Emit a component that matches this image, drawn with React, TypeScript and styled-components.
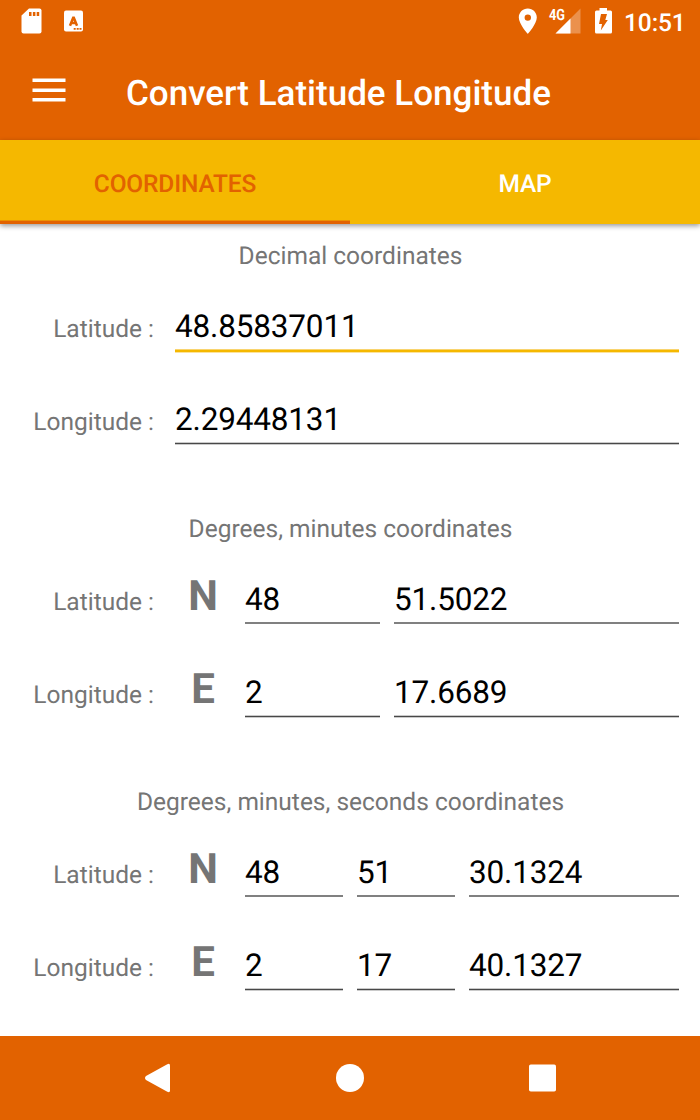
import React from 'react';
import styled, { createGlobalStyle } from 'styled-components';

const orange = '#e26200';
const amber = '#f5b800';

const GlobalStyle = createGlobalStyle`
  * { box-sizing: border-box; }
  body {
    margin: 0;
    background: #fff;
    font-family: Roboto, "Liberation Sans", sans-serif;
    text-rendering: geometricPrecision;
  }
`;

const Screen = styled.div`
  width: 700px;
  height: 1120px;
  display: flex;
  flex-direction: column;
  background: #fff;
  overflow: hidden;
`;

const StatusBar = styled.div`
  height: 42px;
  flex: none;
  display: flex;
  justify-content: space-between;
  background: ${orange};
  color: #fff;
`;

const StatusIcons = styled.svg`
  display: block;
  height: 42px;
`;

const StatusRight = styled.div`
  display: flex;
`;

const Clock = styled.span`
  width: 76px;
  line-height: 45px;
  font-size: 24.5px;
  font-weight: 500;
  letter-spacing: -0.1px;
`;

const AppBar = styled.header`
  height: 98px;
  flex: none;
  display: flex;
  align-items: center;
  padding: 0 0 0 32px;
  background: ${orange};
  color: #fff;
`;

const MenuButton = styled.button`
  width: 94px;
  height: 60px;
  padding: 0;
  border: 0;
  background: none;
`;

const MenuIcon = styled.svg`
  display: block;
`;

const Title = styled.h1`
  margin: 0;
  padding-top: 6px;
  font-size: 35px;
  line-height: 42px;
  font-weight: 500;
`;

const Tabs = styled.nav`
  height: 84px;
  flex: none;
  display: flex;
  background: ${amber};
  box-shadow: 0 2px 5px rgba(0, 0, 0, 0.4);
`;

const Tab = styled.div<{ $active?: boolean }>`
  flex: 1;
  text-align: center;
  line-height: 87px;
  height: 84px;
  font-size: 24.5px;
  font-weight: 500;
  letter-spacing: -0.15px;
  color: ${(p) => (p.$active ? orange : '#fff')};
  border-bottom: ${(p) => (p.$active ? `3px solid ${orange}` : '0')};
  box-shadow: ${(p) => (p.$active ? 'inset 0 -1px 0 rgba(226, 98, 0, 0.45)' : 'none')};
`;

const Content = styled.main`
  flex: 1;
  min-height: 0;
`;

const Section = styled.section`
  height: 273px;
  padding-right: 21px;
`;

const Heading = styled.h2`
  margin: 0;
  padding: 17px 0 0 22px;
  height: 73px;
  font-size: 24.5px;
  line-height: 30px;
  font-weight: 400;
  text-align: center;
  color: #757575;
`;

const Row = styled.div`
  height: 93px;
  display: flex;
  align-items: baseline;
`;

const Label = styled.label`
  width: 154px;
  flex: none;
  text-align: right;
  font-size: 24.5px;
  line-height: 30px;
  color: #757575;
`;

const Hemisphere = styled.span`
  text-align: center;
  font-size: 42px;
  line-height: 37px;
  font-weight: 700;
  color: #757575;
`;

const Fields = styled.div<{ $columns: string }>`
  flex: 1;
  margin-left: 21px;
  display: grid;
  align-items: baseline;
  grid-template-columns: ${(p) => p.$columns};
  column-gap: 14px;
`;

type Line = 'focused' | 'even' | 'fine';

const underlines: Record<Line, string> = {
  focused: `transparent 52px, #f9d46e 52px 53px, ${amber} 53px 55px, #fce39c 55px 56px`,
  even: 'transparent 52px, #808080 52px 54px, transparent 54px',
  fine: 'transparent 52px, #cacaca 52px 53px, #484848 53px 54px, #cacaca 54px 55px, transparent 55px',
};

const Field = styled.span<{ $line: Line }>`
  height: 56px;
  padding-top: 11px;
  font-size: 31.5px;
  line-height: 37px;
  letter-spacing: -0.17px;
  color: #000;
  background: linear-gradient(to bottom, ${(p) => underlines[p.$line]});
`;

const NavBar = styled.footer`
  height: 84px;
  flex: none;
  background: ${orange};
`;

interface CoordinateRowProps {
  label: string;
  hemisphere?: string;
  columns: string;
  values: string[];
  line: Line;
}

function CoordinateRow({ label, hemisphere, columns, values, line }: CoordinateRowProps) {
  return (
    <Row>
      <Label>{label}</Label>
      <Fields $columns={hemisphere ? `56px ${columns}` : columns}>
        {hemisphere && <Hemisphere>{hemisphere}</Hemisphere>}
        {values.map((value) => (
          <Field key={value} $line={line}>{value}</Field>
        ))}
      </Fields>
    </Row>
  );
}

export default function App() {
  return (
    <>
      <GlobalStyle />
      <Screen>
        <StatusBar>
          <StatusIcons width="120" height="42" viewBox="0 0 120 42">
            <path d="M29 8.500h10.500q2 0 2 2v21q0 2-2 2h-16q-2 0-2-2v-16z" fill="#fff" />
            <path d="M29 12h2.500v4H29zM32.900 12h2.500v4h-2.500zM36.700 12h2.500v4h-2.500z" fill={orange} />
            <rect x="64" y="10.500" width="19" height="21" rx="2" fill="#fff" />
            <path d="M70 25.800L73.500 17L77 25.800M71.300 23h4.500" fill="none" stroke={orange} strokeWidth="2.500" strokeLinejoin="bevel" />
            <path d="M73.700 28h2v1.800h-2zM76.700 28h2v1.800h-2zM79.500 28h2v1.800h-2z" fill={orange} />
          </StatusIcons>
          <StatusRight>
            <StatusIcons width="124" height="42" viewBox="500 0 124 42">
              <path d="M527.800 8.500c-5 0-9 4-9 8.900 0 6.700 9 16.300 9 16.300s9-9.600 9-16.300c0-4.900-4-8.900-9-8.900zm0 12.300a3.200 3.200 0 1 1 0-6.400 3.200 3.200 0 0 1 0 6.400z" fill="#fff" />
              <path d="M580.500 8.500v25h-25z" fill="#fff" fillOpacity="0.300" />
              <path d="M570.500 18.500v15h-15z" fill="#fff" />
              <text x="549" y="20" fill="#fff" fontSize="15.500" fontWeight="700" textLength="16" lengthAdjust="spacingAndGlyphs">4G</text>
              <path d="M599.500 8h7.500v2.500h3.500q1.500 0 1.500 1.500v20q0 1.500-1.500 1.500h-14q-1.500 0-1.500-1.500v-20q0-1.500 1.500-1.500h3z" fill="#fff" />
              <path d="M601 14h6l-1.700 6h2.500l-7 10.500 1.200-6.500h-3z" fill={orange} />
            </StatusIcons>
            <Clock>10:51</Clock>
          </StatusRight>
        </StatusBar>
        <AppBar>
          <MenuButton aria-label="Menu">
            <MenuIcon width="34" height="60" viewBox="0 0 34 60">
              <path d="M.5 17.500h33v3.500H.5zM.5 27.400h33v3.500H.5zM.5 37h33v3.500H.5z" fill="#fff" />
            </MenuIcon>
          </MenuButton>
          <Title>Convert Latitude Longitude</Title>
        </AppBar>
        <Tabs>
          <Tab $active>COORDINATES</Tab>
          <Tab>MAP</Tab>
        </Tabs>
        <Content>
          <Section>
            <Heading>Decimal coordinates</Heading>
            <CoordinateRow label="Latitude :" columns="1fr" values={['48.85837011']} line="focused" />
            <CoordinateRow label="Longitude :" columns="1fr" values={['2.29448131']} line="fine" />
          </Section>
          <Section>
            <Heading>Degrees, minutes coordinates</Heading>
            <CoordinateRow label="Latitude :" hemisphere="N" columns="135px 1fr" values={['48', '51.5022']} line="even" />
            <CoordinateRow label="Longitude :" hemisphere="E" columns="135px 1fr" values={['2', '17.6689']} line="fine" />
          </Section>
          <Section>
            <Heading>Degrees, minutes, seconds coordinates</Heading>
            <CoordinateRow label="Latitude :" hemisphere="N" columns="98px 98px 1fr" values={['48', '51', '30.1324']} line="even" />
            <CoordinateRow label="Longitude :" hemisphere="E" columns="98px 98px 1fr" values={['2', '17', '40.1327']} line="fine" />
          </Section>
        </Content>
        <NavBar>
          <svg width="700" height="84" viewBox="0 0 700 84" fill="#fff">
            <path d="M167.300 28.200Q170 26.800 170 29.500V54.500Q170 57 167.300 55.800L146 44Q144 42 146 40Z" />
            <circle cx="350" cy="42" r="14" />
            <rect x="529" y="28.500" width="27" height="27" rx="1.800" />
          </svg>
        </NavBar>
      </Screen>
    </>
  );
}
